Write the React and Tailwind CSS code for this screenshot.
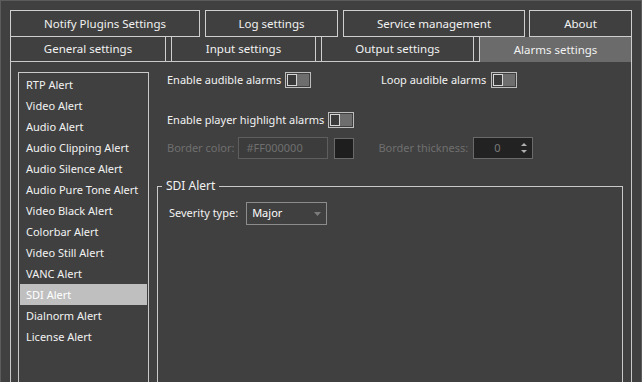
import React from 'react';

const topTabs = [
  { label: 'Notify Plugins Settings', w: 'w-[190px]', ml: '' },
  { label: 'Log settings', w: 'w-[133px]', ml: 'ml-[5px]' },
  { label: 'Service management', w: 'w-[182px]', ml: 'ml-[5px]' },
  { label: 'About', w: 'w-[103px]', ml: 'ml-[4px]' },
];

const bottomTabs = [
  { label: 'General settings', w: 'w-[156px]', ml: '' },
  { label: 'Input settings', w: 'w-[145px]', ml: 'ml-[5px]' },
  { label: 'Output settings', w: 'w-[153px]', ml: 'ml-[5px]' },
  { label: 'Alarms settings', w: 'w-[153px]', ml: 'ml-[5px]', active: true },
];

const alerts = [
  'RTP Alert',
  'Video Alert',
  'Audio Alert',
  'Audio Clipping Alert',
  'Audio Silence Alert',
  'Audio Pure Tone Alert',
  'Video Black Alert',
  'Colorbar Alert',
  'Video Still Alert',
  'VANC Alert',
  'SDI Alert',
  'Dialnorm Alert',
  'License Alert',
];

const Toggle = () => (
  <div className="flex w-[26px] h-[16px] border border-[#bdbdbd] bg-[#404040] p-px shrink-0">
    <div className="w-[10px] h-[12px] border border-[#d6d6d6] bg-[#3a3a3a]" />
    <div className="flex-1 bg-[#6e6e6e]" />
  </div>
);

const App = () => {
  return (
    <div
      className="w-[642px] h-[382px] overflow-hidden bg-[#404040] border-l border-t border-r border-[#5c5c5c] pt-[9px] px-[9px] flex flex-col text-[11px] text-[#f2f2f2] whitespace-nowrap"
      style={{ fontFamily: '"Noto Sans", "Open Sans", sans-serif' }}
    >
      {/* Tab rows */}
      <div className="flex h-[27px] text-[11.5px]">
        {topTabs.map((t) => (
          <div
            key={t.label}
            className={`${t.w} ${t.ml} h-full border border-[#cfcfcf] flex items-center justify-center leading-none pt-px`}
          >
            {t.label}
          </div>
        ))}
      </div>
      <div className="flex h-[24px] relative z-10 text-[11.5px]">
        {bottomTabs.map((t) => (
          <div
            key={t.label}
            className={`${t.w} ${t.ml} border-l border-r border-[#cfcfcf] flex items-center justify-center leading-none ${
              t.active ? 'bg-[#6b6b6b] h-[25px]' : 'h-full'
            }`}
          >
            {t.label}
          </div>
        ))}
      </div>

      {/* Pane */}
      <div className="flex-1 border-l border-r border-t border-[#c9c9c9] flex pl-[7px] pr-[8px] pt-[10px]">
        <div className="w-[131px] shrink-0 border-l border-r border-t border-[#c9c9c9] px-px pt-px">
          {alerts.map((a) => (
            <div
              key={a}
              className={`h-[21px] flex items-center pl-[6px] leading-none ${
                a === 'SDI Alert' ? 'bg-[#bfbfbf] text-white' : ''
              }`}
            >
              {a}
            </div>
          ))}
        </div>

        <div className="flex-1 ml-[8px] flex flex-col">
          <div className="pl-[10px] flex flex-col">
            <div className="flex items-center h-[16px]">
              <div className="w-[214px] flex items-center gap-[4px]">
                <span>Enable audible alarms</span>
                <Toggle />
              </div>
              <div className="flex items-center gap-[5px]">
                <span>Loop audible alarms</span>
                <Toggle />
              </div>
            </div>

            <div className="flex items-center h-[16px] mt-[24px] gap-[4px]">
              <span>Enable player highlight alarms</span>
              <Toggle />
            </div>

            <div className="flex items-center h-[22px] mt-[9px] text-[#6f6f6f]">
              <span>Border color:</span>
              <div className="ml-[4px] w-[90px] h-[22px] border border-[#5e5e5e] bg-[#3c3c3c] flex items-center pl-[7px]">
                #FF000000
              </div>
              <div className="ml-[6px] w-[20px] h-[21px] border border-[#6a6a6a] bg-[#1e1e1e]" />
              <div className="w-[24px]" />
              <span className="w-[89px]">Border thickness:</span>
              <div className="ml-[6px] w-[60px] h-[22px] border border-[#6a6a6a] bg-[#222222] flex items-center justify-end pr-[4px]">
                <span className="text-[#7a7a7a]">0</span>
                <svg width="8" height="14" viewBox="0 0 8 14" className="ml-[20px]">
                  <path d="M1 5 L4 2 L7 5 Z" fill="#b0b0b0" />
                  <path d="M1 9 L4 12 L7 9 Z" fill="#b0b0b0" />
                </svg>
              </div>
            </div>
          </div>

          <fieldset className="mt-[19px] flex-1 border border-b-0 border-[#c9c9c9] px-[4px]">
            <legend className="px-[4px] leading-[16px] text-[12px]">SDI Alert</legend>
            <div className="flex items-center mt-[8px] ml-[7px]">
              <span>Severity type:</span>
              <div className="ml-[8px] w-[81px] h-[23px] border border-[#8c8c8c] flex items-center justify-between pl-[5px] pr-[5px]">
                <span className="text-white">Major</span>
                <svg width="7" height="4" viewBox="0 0 7 4">
                  <path d="M0 0 L7 0 L3.5 4 Z" fill="#7c7c7c" />
                </svg>
              </div>
            </div>
          </fieldset>
        </div>
      </div>
    </div>
  );
};

export default App;
